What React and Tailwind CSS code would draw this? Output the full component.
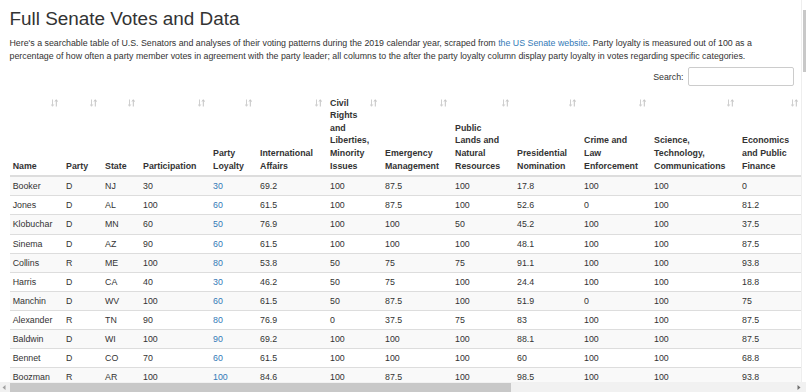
import React from "react";

const cols = [
  { label: ["Name"], w: "w-[53.4px]" },
  { label: ["Party"], w: "w-[39px]" },
  { label: ["State"], w: "w-[38px]" },
  { label: ["Participation"], w: "w-[70px]" },
  { label: ["Party", "Loyalty"], w: "w-[47px]" },
  { label: ["International", "Affairs"], w: "w-[70px]" },
  { label: ["Civil", "Rights", "and", "Liberties,", "Minority", "Issues"], w: "w-[55px]" },
  { label: ["Emergency", "Management"], w: "w-[70px]" },
  { label: ["Public", "Lands and", "Natural", "Resources"], w: "w-[62px]" },
  { label: ["Presidential", "Nomination"], w: "w-[67px]" },
  { label: ["Crime and", "Law", "Enforcement"], w: "w-[70px]" },
  { label: ["Science,", "Technology,", "Communications"], w: "w-[88px]" },
  { label: ["Economics", "and Public", "Finance"], w: "w-[64px]" },
];

const rows = [
  ["Booker", "D", "NJ", "30", "30", "69.2", "100", "87.5", "100", "17.8", "100", "100", "0"],
  ["Jones", "D", "AL", "100", "60", "61.5", "100", "87.5", "100", "52.6", "0", "100", "81.2"],
  ["Klobuchar", "D", "MN", "60", "50", "76.9", "100", "100", "50", "45.2", "100", "100", "37.5"],
  ["Sinema", "D", "AZ", "90", "60", "61.5", "100", "100", "100", "48.1", "100", "100", "87.5"],
  ["Collins", "R", "ME", "100", "80", "53.8", "50", "75", "75", "91.1", "100", "100", "93.8"],
  ["Harris", "D", "CA", "40", "30", "46.2", "50", "75", "100", "24.4", "100", "100", "18.8"],
  ["Manchin", "D", "WV", "100", "60", "61.5", "50", "87.5", "100", "51.9", "0", "100", "75"],
  ["Alexander", "R", "TN", "90", "80", "76.9", "0", "37.5", "75", "83", "100", "100", "87.5"],
  ["Baldwin", "D", "WI", "100", "90", "69.2", "100", "100", "100", "88.1", "100", "100", "87.5"],
  ["Bennet", "D", "CO", "70", "60", "61.5", "100", "100", "100", "60", "100", "100", "68.8"],
  ["Boozman", "R", "AR", "100", "100", "84.6", "100", "87.5", "100", "98.5", "100", "100", "93.8"],
];

function SortIcon() {
  return (
    <svg width="7" height="8" viewBox="0 0 7 8" className="absolute right-[5px] top-[6px]">
      <path d="M1.5 0.5 V7 M0.2 5.4 L1.5 7.3 L2.8 5.4" stroke="#cfcfcf" strokeWidth="1" fill="none" />
      <path d="M5.3 7.5 V1 M4 2.6 L5.3 0.7 L6.6 2.6" stroke="#c4c4c4" strokeWidth="1" fill="none" />
    </svg>
  );
}

export default function App() {
  return (
    <div className="relative w-[806px] h-[392px] overflow-hidden bg-white text-[#333] font-['Liberation_Sans',Arial,sans-serif]">
      <div className="px-[9.5px]">
        <h2 className="pt-[8.5px] text-[18.9px] leading-[20.8px] font-normal text-[#333]">
          Full Senate Votes and Data
        </h2>
        <p className="mt-[8px] text-[8.82px] leading-[12.6px]">
          <span className="block whitespace-nowrap">
            Here's a searchable table of U.S. Senators and analyses of their voting patterns during the 2019 calendar year, scraped from{" "}
            <span className="text-[#337ab7]">the US Senate website</span>. Party loyalty is measured out of 100 as a
          </span>
          <span className="block whitespace-nowrap">
            percentage of how often a party member votes in agreement with the party leader; all columns to the after the party loyalty column display party loyalty in votes regarding specific categories.
          </span>
        </p>
        <div className="mt-[5px] flex justify-end items-center gap-[4px] pr-[3px]">
          <span className="text-[8.82px] leading-[12.6px]">Search:</span>
          <div className="w-[106px] h-[19px] border border-[#ccc] rounded-[2px] bg-white" />
        </div>
        <table className="mt-[7px] table-fixed border-collapse w-[791px] text-[8.82px] leading-[12.6px]">
          <colgroup>
            {cols.map((c, i) => (
              <col key={i} className={c.w} />
            ))}
          </colgroup>
          <thead>
            <tr>
              {cols.map((c, i) => (
                <th
                  key={i}
                  className="relative align-bottom text-left font-bold pl-[3.15px] pr-[3px] pt-[3.2px] pb-[3px] border-b-2 border-[#ddd]"
                >
                  <SortIcon />
                  {c.label.map((l, j) => (
                    <div key={j} className="whitespace-nowrap">{l}</div>
                  ))}
                </th>
              ))}
            </tr>
          </thead>
          <tbody>
            {rows.map((r, i) => (
              <tr key={i} className={i % 2 === 0 ? "bg-[#f9f9f9]" : "bg-white"}>
                {r.map((v, j) => (
                  <td
                    key={j}
                    className={
                      "pl-[3.15px] pr-[3px] pt-[3px] pb-[2.5px] border-t border-[#ddd] whitespace-nowrap " +
                      (j === 4 ? "text-[#337ab7]" : "")
                    }
                  >
                    {v}
                  </td>
                ))}
              </tr>
            ))}
          </tbody>
        </table>
      </div>

      {/* vertical scrollbar */}
      <div className="absolute top-0 right-0 w-[5px] h-[382px] bg-white border-l border-[#eee]">
        <div className="absolute top-[10px] right-0 w-[3px] h-[62px] bg-[#c8c8c8]" />
      </div>

      {/* horizontal scrollbar */}
      <div className="absolute left-0 bottom-0 w-[806px] h-[10px] bg-[#f1f1f1]">
        <div className="absolute left-[10px] top-[1px] w-[501px] h-[9px] bg-[#c8c8c8]" />
        <svg width="4" height="5" viewBox="0 0 4 5" className="absolute left-[2px] top-[2.5px]">
          <path d="M3.5 0 L0.5 2.5 L3.5 5 Z" fill="#a0a0a0" />
        </svg>
        <svg width="4" height="5" viewBox="0 0 4 5" className="absolute left-[797px] top-[2.5px]">
          <path d="M0.5 0 L3.5 2.5 L0.5 5 Z" fill="#707070" />
        </svg>
      </div>
    </div>
  );
}
